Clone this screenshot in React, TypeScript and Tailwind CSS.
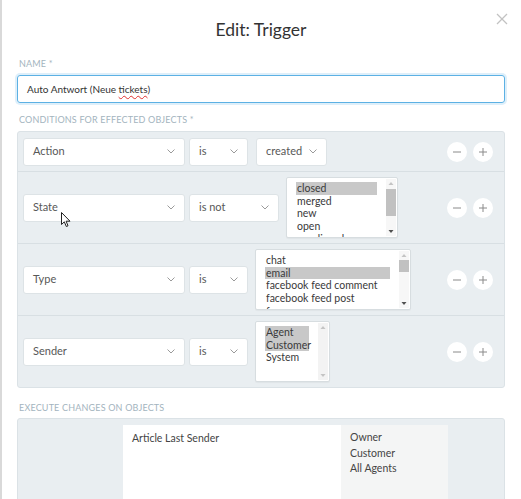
import * as React from 'react'

const Chevron = () => (
  <svg width="8" height="5" viewBox="0 0 8 5" className="shrink-0">
    <polyline points="0.5,0.5 4,4 7.5,0.5" fill="none" stroke="#9a9a9a" strokeWidth="1" />
  </svg>
)

const Select: React.FC<{label: string; width: string; ml?: string}> = ({label, width, ml}) => (
  <div
    className={`${width} ${ml ?? ''} h-[28px] shrink-0 flex items-center justify-between pl-[9px] pr-[9px] bg-white border border-[#dde3e6] rounded-[3px] text-[11px] text-[#585858]`}
  >
    <span>{label}</span>
    <Chevron />
  </div>
)

const Scrollbar: React.FC<{thumb?: [number, number]; disabled?: boolean}> = ({thumb, disabled}) => (
  <div className={`w-[10px] h-full flex flex-col justify-between items-center ${disabled ? 'bg-[#f3f3f3]' : 'bg-[#f7f7f7]'}`}>
    <svg width="6" height="8" viewBox="0 0 6 8">
      <polygon points="0.5,6 3,3 5.5,6" fill="#c4c4c4" />
    </svg>
    {thumb && (
      <div className="w-full flex-1 relative">
        <div className="absolute left-0 right-0 bg-[#c1c1c1]" style={{top: thumb[0], height: thumb[1]}} />
      </div>
    )}
    <svg width="6" height="8" viewBox="0 0 6 8">
      <polygon points="0.5,2 3,5 5.5,2" fill={disabled ? '#c4c4c4' : '#505050'} />
    </svg>
  </div>
)

const MultiSelect: React.FC<{
  options: string[]
  selected: string[]
  width: string
  thumb?: [number, number]
}> = ({options, selected, width, thumb}) => (
  <div
    className={`${width} h-[61px] shrink-0 ml-[7px] flex bg-white border border-[#d7dde0] rounded-[2px] shadow-[0_1px_1px_rgba(0,0,0,0.04)] overflow-hidden`}
  >
    <div className="flex-1 px-[9px] pt-[4px] overflow-hidden text-[10.5px] leading-[12.7px] text-[#3a3a3a]">
      {options.map((o) => (
        <div key={o} className={`whitespace-nowrap pl-[1px] ${selected.includes(o) ? 'bg-[#c8c8c8]' : ''}`}>
          {o}
        </div>
      ))}
    </div>
    <div className="py-[1px] pr-[1px]">
      <Scrollbar thumb={thumb} disabled={!thumb} />
    </div>
  </div>
)

const RoundButton: React.FC<{sign: '-' | '+'}> = ({sign}) => (
  <div className="w-[20px] h-[20px] rounded-full bg-white flex items-center justify-center">
    <svg width="10" height="10" viewBox="0 0 10 10">
      <line x1="1" y1="5" x2="9" y2="5" stroke="#8a8a8a" strokeWidth="1" />
      {sign === '+' && <line x1="5" y1="1" x2="5" y2="9" stroke="#8a8a8a" strokeWidth="1" />}
    </svg>
  </div>
)

const Buttons = () => (
  <div className="ml-auto flex gap-[6px] pr-[6px]">
    <RoundButton sign="-" />
    <RoundButton sign="+" />
  </div>
)

const Label: React.FC<{children: React.ReactNode; className?: string}> = ({children, className}) => (
  <div className={`ml-[2px] text-[9px] leading-[12px] uppercase tracking-[0.02em] text-[#a3b4be] ${className ?? ''}`}>
    {children}
  </div>
)

export default function App() {
  return (
    <div className="relative w-[521px] h-[499px] overflow-hidden bg-white border-l-2 border-[#d9d9d9] font-['Lato',sans-serif]">
      {/* close */}
      <svg className="absolute left-[494px] top-[13px]" width="12" height="12" viewBox="0 0 12 12">
        <line x1="1" y1="1" x2="11" y2="11" stroke="#c2c2c2" strokeWidth="1.2" />
        <line x1="11" y1="1" x2="1" y2="11" stroke="#c2c2c2" strokeWidth="1.2" />
      </svg>

      <div className="pl-[15px] pr-[16px]">
        <h1 className="pt-[19px] text-center text-[17.5px] leading-[22px] text-[#333]">Edit: Trigger</h1>

        <Label className="mt-[17px]">Name *</Label>
        <div className="mt-[5px] h-[28px] flex items-center px-[9px] border border-[#5cb1e4] rounded-[3px] shadow-[0_0_0_2px_rgba(92,177,228,0.2)] text-[10px] text-[#333] whitespace-pre">
          {'Auto Antwort (Neue '}
          <span className="underline decoration-wavy decoration-[#e03030] decoration-[1px] underline-offset-[2px]">
            tickets
          </span>
          )
        </div>

        <Label className="mt-[11px]">Conditions for effected objects *</Label>
        <div className="mt-[5px] bg-[#e9eef1] border border-[#dbe2e6] rounded-[3px]">
          <div className="h-[40px] flex items-center px-[5px] border-b border-[#d8dfe3]">
            <Select label="Action" width="w-[162px]" />
            <Select label="is" width="w-[59px]" ml="ml-[4px]" />
            <Select label="created" width="w-[71px]" ml="ml-[8px]" />
            <Buttons />
          </div>
          <div className="py-[5px] flex items-center px-[5px] border-b border-[#d8dfe3]">
            <Select label="State" width="w-[162px]" />
            <Select label="is not" width="w-[90px]" ml="ml-[4px]" />
            <MultiSelect
              width="w-[112px]"
              options={['closed', 'merged', 'new', 'open', 'pending close']}
              selected={['closed']}
              thumb={[2, 27]}
            />
            <Buttons />
          </div>
          <div className="py-[5px] flex items-center px-[5px] border-b border-[#d8dfe3]">
            <Select label="Type" width="w-[162px]" />
            <Select label="is" width="w-[59px]" ml="ml-[4px]" />
            <MultiSelect
              width="w-[156px]"
              options={['chat', 'email', 'facebook feed comment', 'facebook feed post', 'fax']}
              selected={['email']}
              thumb={[1, 12]}
            />
            <Buttons />
          </div>
          <div className="py-[5px] flex items-center px-[5px]">
            <Select label="Sender" width="w-[162px]" />
            <Select label="is" width="w-[59px]" ml="ml-[4px]" />
            <MultiSelect width="w-[75px]" options={['Agent', 'Customer', 'System']} selected={['Agent', 'Customer']} />
            <Buttons />
          </div>
        </div>

        <Label className="mt-[14px]">Execute changes on objects</Label>
        <div className="mt-[4px] h-[120px] bg-[#e9eef1] border border-[#dbe2e6] rounded-t-[3px] pt-[6px] pl-[105px] flex">
          <div className="w-[218px] bg-white pt-[6px] pl-[9px] text-[10.5px] text-[#444]">Article Last Sender</div>
          <div className="w-[107px] bg-[#f4f5f5] pt-[5px] pl-[9px] text-[10.5px] leading-[15.5px] text-[#444]">
            <div>Owner</div>
            <div>Customer</div>
            <div>All Agents</div>
          </div>
        </div>
      </div>

      {/* mouse cursor */}
      <svg className="absolute left-[59px] top-[212px]" width="10" height="16" viewBox="0 0 10 16">
        <path d="M0.5 0.5 L0.5 12.5 L3.3 9.8 L5.3 14.5 L7 13.8 L5.1 9.2 L9 9.2 Z" fill="white" stroke="#222" strokeWidth="1" strokeLinejoin="round" />
      </svg>
    </div>
  )
}
